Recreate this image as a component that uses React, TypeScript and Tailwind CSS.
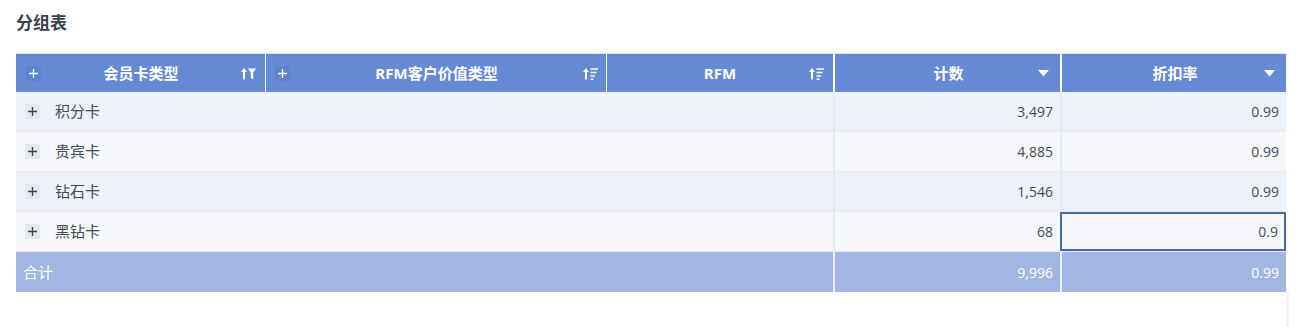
import React from 'react';

type Row = { name: string; count: string; rate: string; selected?: boolean };

const ROWS: Row[] = [
  { name: '积分卡', count: '3,497', rate: '0.99' },
  { name: '贵宾卡', count: '4,885', rate: '0.99' },
  { name: '钻石卡', count: '1,546', rate: '0.99' },
  { name: '黑钻卡', count: '68', rate: '0.9', selected: true },
];

const FONT = { fontFamily: '"Open Sans", "Noto Sans CJK SC", sans-serif' };

function PlusBox({ dark }: { dark?: boolean }) {
  return (
    <span className={`w-[15px] h-[15px] flex items-center justify-center flex-shrink-0 ${dark ? 'bg-[#5f82cc]' : 'bg-[#e5e7ef]'}`}>
      <svg width="11" height="11" viewBox="0 0 11 11">
        <path d="M5.5 1v9M1 5.5h9" stroke={dark ? '#ffffff' : '#3d4352'} strokeWidth="1.4" />
      </svg>
    </span>
  );
}

function SortFilterIcon() {
  return (
    <svg width="15" height="13" viewBox="0 0 15 13">
      <path d="M3 12.5V2.5" stroke="#fff" strokeWidth="2" />
      <path d="M0 5L3 1L6 5Z" fill="#fff" />
      <path d="M7 1.5h8L12.2 5.6V12.5L9.8 11V5.6Z" fill="#fff" />
    </svg>
  );
}

function SortLinesIcon() {
  return (
    <svg width="15" height="13" viewBox="0 0 15 13">
      <path d="M3 12.5V2.5" stroke="#fff" strokeWidth="2" />
      <path d="M0 5L3 1L6 5Z" fill="#fff" />
      <path d="M7.5 2h7.5M7.5 5.5h6M7.5 9h4.5M7.5 12.2h3" stroke="#fff" strokeWidth="1.4" />
    </svg>
  );
}

function CaretIcon() {
  return (
    <svg width="11" height="7" viewBox="0 0 11 7">
      <path d="M0 0h11L5.5 6.5Z" fill="#fff" />
    </svg>
  );
}

export default function App() {
  return (
    <div className="w-[1300px] h-[327px] bg-white overflow-hidden" style={FONT}>
      <div className="pl-4 pt-[11px]">
        <h2 className="text-[17px] leading-6 font-bold text-[#3b404d]">分组表</h2>
      </div>

      <div className="ml-4 mt-[18px] w-[1270px] border-t border-[#dfe5f2]">
        {/* Header */}
        <div className="grid grid-cols-[249px_341px_227px_227px_226px] h-[38px] bg-[#6589d3] text-white text-[15px] font-bold">
          <div className="flex items-center pl-[10px] pr-[9px]">
            <PlusBox dark />
            <span className="flex-1 text-center">会员卡类型</span>
            <SortFilterIcon />
          </div>
          <div className="flex items-center pl-[9px] pr-[8px] border-l border-white">
            <PlusBox dark />
            <span className="flex-1 text-center">RFM客户价值类型</span>
            <SortLinesIcon />
          </div>
          <div className="flex items-center pl-[24px] pr-[9px] border-l border-white">
            <span className="flex-1 text-center">RFM</span>
            <SortLinesIcon />
          </div>
          <div className="flex items-center pl-[24px] pr-[11px] border-l-2 border-white">
            <span className="flex-1 text-center">计数</span>
            <CaretIcon />
          </div>
          <div className="flex items-center pl-[24px] pr-[11px] border-l-2 border-white">
            <span className="flex-1 text-center">折扣率</span>
            <CaretIcon />
          </div>
        </div>

        {/* Body */}
        {ROWS.map((r, i) => (
          <div
            key={r.name}
            className={`grid grid-cols-[817px_227px_226px] h-[40px] border-b border-[#e6eaf4] text-[14px] text-[#454a57] ${i % 2 === 0 ? 'bg-[#edf1f9]' : 'bg-[#f6f8fc]'}`}
          >
            <div className="flex items-center pl-[9px]">
              <PlusBox />
              <span className="ml-[15px] text-[15px]">{r.name}</span>
            </div>
            <div className="flex items-center justify-end pr-[7px] border-l-2 border-[#e6eaf4]">{r.count}</div>
            <div className={`flex items-center justify-end ${r.selected ? 'border-2 border-[#4b69aa] pr-[6px]' : 'pr-[7px] border-l-2 border-[#e6eaf4]'}`}>{r.rate}</div>
          </div>
        ))}

        {/* Total */}
        <div className="grid grid-cols-[817px_227px_226px] h-[40px] bg-[#a1b6e3] text-white text-[14px]">
          <div className="flex items-center pl-[7px] text-[15px]">合计</div>
          <div className="flex items-center justify-end pr-[7px] border-l-2 border-[#e9eef8]">9,996</div>
          <div className="flex items-center justify-end pr-[7px] border-l-2 border-[#e9eef8]">0.99</div>
        </div>
      </div>
      <div className="ml-4 w-[1273px] h-[40px] border-r-[3px] border-[#f2f3f6]" />
    </div>
  );
}
